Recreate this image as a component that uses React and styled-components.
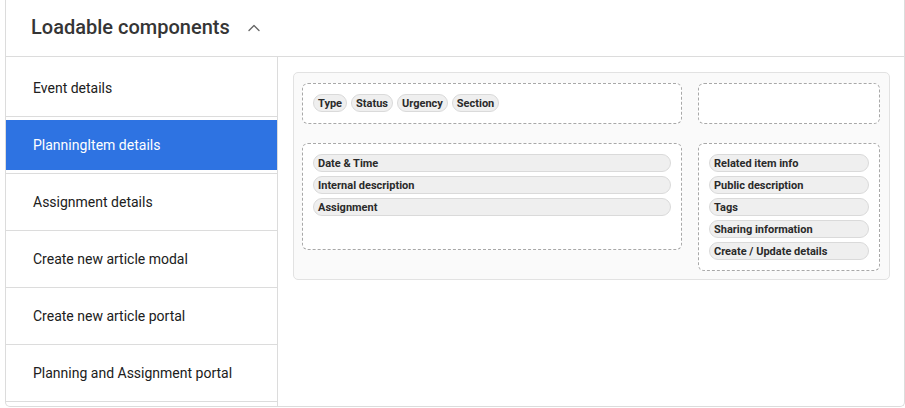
import React from "react";
import styled, { createGlobalStyle } from "styled-components";
import { ChevronUp } from "lucide-react";

const Global = createGlobalStyle`
  html, body { margin: 0; padding: 0; background: #fff; }
  body { font-family: Roboto, "Liberation Sans", Arial, sans-serif; }
  * { box-sizing: border-box; }
`;

const Card = styled.div`
  margin-left: 5px;
  width: 900px;
  border: 1px solid #dcdcdc;
  border-top: none;
  border-radius: 0 0 5px 5px;
  background: #fff;
`;

const Header = styled.div`
  height: 57px;
  display: flex;
  align-items: center;
  padding: 0 0 3px 25px;
  border-bottom: 1px solid #dcdcdc;
  gap: 14px;
`;

const Title = styled.h2`
  margin: 0;
  font-size: 20px;
  font-weight: 500;
  color: #353535;
`;

const Toggle = styled.span`
  display: flex;
  color: #666;
  margin-top: 2px;
`;

const Body = styled.div`
  display: flex;
`;

const Sidebar = styled.ul`
  list-style: none;
  margin: 0;
  padding: 3px 0 4px;
  width: 272px;
  flex-shrink: 0;
  border-right: 1px solid #dcdcdc;
`;

const Item = styled.li`
  height: 57px;
  padding: 3px 0;
  border-bottom: 1px solid #dcdcdc;
`;

const ItemLabel = styled.div`
  height: 100%;
  display: flex;
  align-items: center;
  padding-left: 27px;
  font-size: 14px;
  color: ${(p) => (p.$active ? "#fff" : "#202020")};
  background: ${(p) => (p.$active ? "#2e73e2" : "transparent")};
`;

const Content = styled.div`
  flex: 1;
  padding: 15px 14px 15px 15px;
`;

const Panel = styled.div`
  background: #fafafa;
  border: 1px solid #e2e2e2;
  border-radius: 5px;
  padding: 10px 9px 8px 8px;
  display: grid;
  grid-template-columns: minmax(0, 1fr) 182px;
  column-gap: 16px;
  row-gap: 19px;
  align-items: start;
`;

const Zone = styled.div`
  border: 1px dashed #a8a8a8;
  border-radius: 6px;
  background: #fff;
  padding: 10px;
  min-height: ${(p) => p.$minH || 0}px;
  display: flex;
  flex-direction: ${(p) => (p.$stack ? "column" : "row")};
  flex-wrap: ${(p) => (p.$stack ? "nowrap" : "wrap")};
  align-content: flex-start;
  gap: 4px;
`;

const Chip = styled.span`
  display: inline-flex;
  align-items: center;
  height: 18px;
  padding: 0 4px;
  border: 1px solid #dadada;
  border-radius: 9px;
  background: #efefef;
  font-size: 11px;
  font-weight: 700;
  color: #2a2a2a;
  white-space: nowrap;
`;

const items = [
  "Event details",
  "PlanningItem details",
  "Assignment details",
  "Create new article modal",
  "Create new article portal",
  "Planning and Assignment portal",
];

export default function App() {
  return (
    <>
      <Global />
      <Card>
        <Header>
          <Title>Loadable components</Title>
          <Toggle>
            <ChevronUp size={20} strokeWidth={1.6} />
          </Toggle>
        </Header>
        <Body>
          <Sidebar>
            {items.map((t) => (
              <Item key={t}>
                <ItemLabel $active={t === "PlanningItem details"}>{t}</ItemLabel>
              </Item>
            ))}
          </Sidebar>
          <Content>
            <Panel>
              <Zone $minH={41}>
                <Chip>Type</Chip>
                <Chip>Status</Chip>
                <Chip>Urgency</Chip>
                <Chip>Section</Chip>
              </Zone>
              <Zone $minH={41} />
              <Zone $stack $minH={107}>
                <Chip>Date &amp; Time</Chip>
                <Chip>Internal description</Chip>
                <Chip>Assignment</Chip>
              </Zone>
              <Zone $stack>
                <Chip>Related item info</Chip>
                <Chip>Public description</Chip>
                <Chip>Tags</Chip>
                <Chip>Sharing information</Chip>
                <Chip>Create / Update details</Chip>
              </Zone>
            </Panel>
          </Content>
        </Body>
      </Card>
    </>
  );
}
